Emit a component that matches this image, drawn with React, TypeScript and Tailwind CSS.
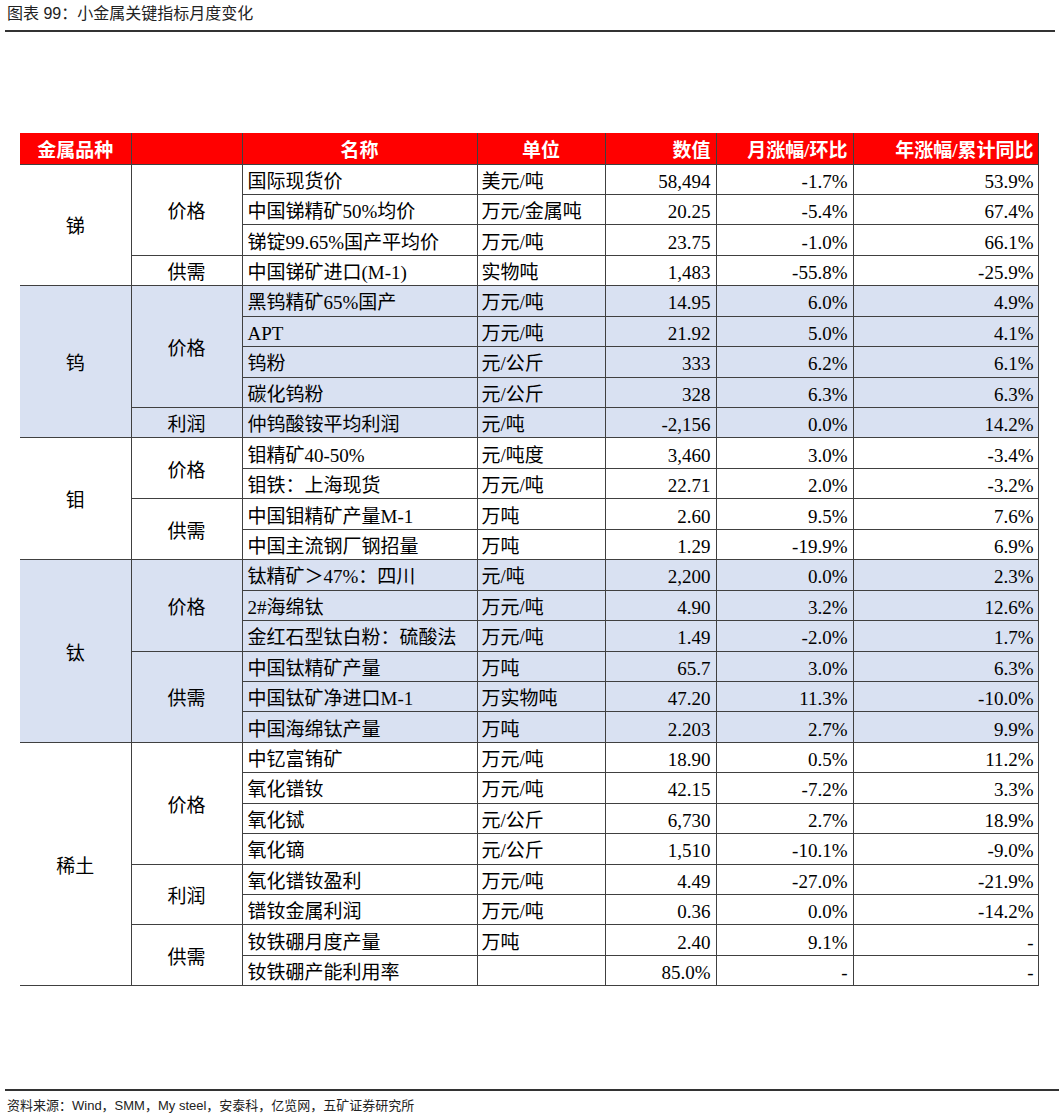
type Row = { name: string; unit: string; value: string; mom: string; yoy: string };
type Sub = { label: string; rows: Row[] };
type Group = { metal: string; blue: boolean; subs: Sub[] };

const r = (name: string, unit: string, value: string, mom: string, yoy: string): Row => ({ name, unit, value, mom, yoy });

const groups: Group[] = [
  {
    metal: "锑",
    blue: false,
    subs: [
      {
        label: "价格",
        rows: [
          r("国际现货价", "美元/吨", "58,494", "-1.7%", "53.9%"),
          r("中国锑精矿50%均价", "万元/金属吨", "20.25", "-5.4%", "67.4%"),
          r("锑锭99.65%国产平均价", "万元/吨", "23.75", "-1.0%", "66.1%"),
        ],
      },
      { label: "供需", rows: [r("中国锑矿进口(M-1)", "实物吨", "1,483", "-55.8%", "-25.9%")] },
    ],
  },
  {
    metal: "钨",
    blue: true,
    subs: [
      {
        label: "价格",
        rows: [
          r("黑钨精矿65%国产", "万元/吨", "14.95", "6.0%", "4.9%"),
          r("APT", "万元/吨", "21.92", "5.0%", "4.1%"),
          r("钨粉", "元/公斤", "333", "6.2%", "6.1%"),
          r("碳化钨粉", "元/公斤", "328", "6.3%", "6.3%"),
        ],
      },
      { label: "利润", rows: [r("仲钨酸铵平均利润", "元/吨", "-2,156", "0.0%", "14.2%")] },
    ],
  },
  {
    metal: "钼",
    blue: false,
    subs: [
      {
        label: "价格",
        rows: [
          r("钼精矿40-50%", "元/吨度", "3,460", "3.0%", "-3.4%"),
          r("钼铁：上海现货", "万元/吨", "22.71", "2.0%", "-3.2%"),
        ],
      },
      {
        label: "供需",
        rows: [
          r("中国钼精矿产量M-1", "万吨", "2.60", "9.5%", "7.6%"),
          r("中国主流钢厂钢招量", "万吨", "1.29", "-19.9%", "6.9%"),
        ],
      },
    ],
  },
  {
    metal: "钛",
    blue: true,
    subs: [
      {
        label: "价格",
        rows: [
          r("钛精矿＞47%：四川", "元/吨", "2,200", "0.0%", "2.3%"),
          r("2#海绵钛", "万元/吨", "4.90", "3.2%", "12.6%"),
          r("金红石型钛白粉：硫酸法", "万元/吨", "1.49", "-2.0%", "1.7%"),
        ],
      },
      {
        label: "供需",
        rows: [
          r("中国钛精矿产量", "万吨", "65.7", "3.0%", "6.3%"),
          r("中国钛矿净进口M-1", "万实物吨", "47.20", "11.3%", "-10.0%"),
          r("中国海绵钛产量", "万吨", "2.203", "2.7%", "9.9%"),
        ],
      },
    ],
  },
  {
    metal: "稀土",
    blue: false,
    subs: [
      {
        label: "价格",
        rows: [
          r("中钇富铕矿", "万元/吨", "18.90", "0.5%", "11.2%"),
          r("氧化镨钕", "万元/吨", "42.15", "-7.2%", "3.3%"),
          r("氧化铽", "元/公斤", "6,730", "2.7%", "18.9%"),
          r("氧化镝", "元/公斤", "1,510", "-10.1%", "-9.0%"),
        ],
      },
      {
        label: "利润",
        rows: [
          r("氧化镨钕盈利", "万元/吨", "4.49", "-27.0%", "-21.9%"),
          r("镨钕金属利润", "万元/吨", "0.36", "0.0%", "-14.2%"),
        ],
      },
      {
        label: "供需",
        rows: [
          r("钕铁硼月度产量", "万吨", "2.40", "9.1%", "-"),
          r("钕铁硼产能利用率", "", "85.0%", "-", "-"),
        ],
      },
    ],
  },
];

// shared cell look: dark rules below and to the right, text sits a little low like the source sheet
const cell = "border-b border-r border-[#404040] h-[30.44px] px-0 pt-[5px] pb-0 align-middle";

export default function App() {
  return (
    <div className="w-[1061px] h-[1118px] bg-white text-black font-['Liberation_Sans','Noto_Sans_CJK_SC',sans-serif]">
      <div className="pt-[4px] pl-[7px] text-[16px] leading-[20px] text-[#222]">图表 99：小金属关键指标月度变化</div>
      <div className="mt-[6px] ml-[5px] mr-[6px] h-[2px] bg-[#333]" />

      <table className="mt-[101px] ml-[20px] w-[1018px] table-fixed border-collapse text-[19px] leading-[24px] font-['Liberation_Serif','Noto_Sans_CJK_SC',serif]">
        <colgroup>
          <col className="w-[111px]" />
          <col className="w-[111px]" />
          <col className="w-[235px]" />
          <col className="w-[128px]" />
          <col className="w-[111px]" />
          <col className="w-[137px]" />
          <col className="w-[185px]" />
        </colgroup>
        <thead>
          <tr className="bg-[#ff0000] text-white font-bold">
            <th className={`${cell} h-[31px] text-center`}>金属品种</th>
            <th className={`${cell} h-[31px]`}></th>
            <th className={`${cell} h-[31px] text-center`}>名称</th>
            <th className={`${cell} h-[31px] text-center`}>单位</th>
            <th className={`${cell} h-[31px] text-right pr-[5px]`}>数值</th>
            <th className={`${cell} h-[31px] text-right pr-[5px]`}>月涨幅/环比</th>
            <th className={`${cell} h-[31px] text-right pr-[4px]`}>年涨幅/累计同比</th>
          </tr>
        </thead>
        <tbody>
          {groups.map((g) => {
            const total = g.subs.reduce((n, s) => n + s.rows.length, 0);
            const bg = g.blue ? "bg-[#d9e1f2]" : "bg-white";
            return g.subs.map((s, si) =>
              s.rows.map((row, ri) => (
                <tr key={g.metal + s.label + ri} className={bg}>
                  {si === 0 && ri === 0 && (
                    <td rowSpan={total} className={`${cell} text-center`}>
                      {g.metal}
                    </td>
                  )}
                  {ri === 0 && (
                    <td rowSpan={s.rows.length} className={`${cell} text-center`}>
                      {s.label}
                    </td>
                  )}
                  <td className={`${cell} pl-[5px] whitespace-nowrap`}>{row.name}</td>
                  <td className={`${cell} pl-[4px] whitespace-nowrap`}>{row.unit}</td>
                  <td className={`${cell} pr-[5px] text-right`}>{row.value}</td>
                  <td className={`${cell} pr-[5px] text-right`}>{row.mom}</td>
                  <td className={`${cell} pr-[4px] text-right`}>{row.yoy}</td>
                </tr>
              ))
            );
          })}
        </tbody>
      </table>

      <div className="mt-[103px] ml-[5px] mr-[2px] h-[2px] bg-[#333]" />
      <div className="mt-[6px] pl-[7px] text-[13px] leading-[18px] text-[#222]">
        资料来源：Wind，SMM，My steel，安泰科，亿览网，五矿证券研究所
      </div>
    </div>
  );
}
